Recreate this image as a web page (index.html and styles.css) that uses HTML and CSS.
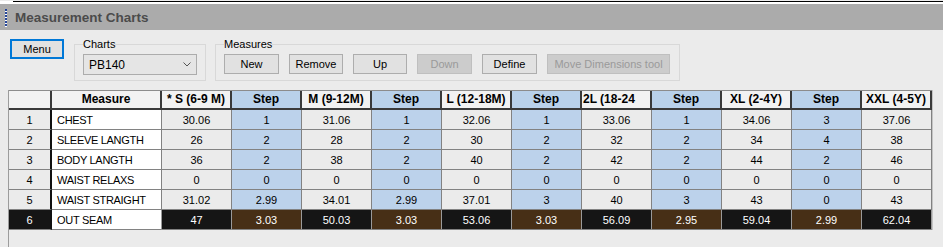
FILE: index.html
```html
<!DOCTYPE html>
<html lang="en">
<head>
    <meta charset="UTF-8">
    <title>Measurement Charts</title>
    <link rel="stylesheet" href="styles.css">
</head>
<body>
    <div class="topline"><div class="topline-bar"></div></div>
    <div class="titlebar">
        <span class="grip"></span>
        <span class="title">Measurement Charts</span>
    </div>

    <div class="toolbar">
        <button class="btn btn-menu">Menu</button>

        <fieldset class="group group-charts">
            <legend>Charts</legend>
            <div class="select">
                <span>PB140</span>
                <svg width="8" height="5" viewBox="0 0 8 5"><path d="M0.5 0.5 L4 4 L7.5 0.5" fill="none" stroke="#555" stroke-width="1"/></svg>
            </div>
        </fieldset>

        <fieldset class="group group-measures">
            <legend>Measures</legend>
            <button class="btn">New</button>
            <button class="btn btn-narrow">Remove</button>
            <button class="btn btn-narrow">Up</button>
            <button class="btn" disabled>Down</button>
            <button class="btn">Define</button>
            <button class="btn btn-wide" disabled>Move Dimensions tool</button>
        </fieldset>
    </div>

    <!-- measurement grid -->
    <div class="grid">
        <table>
            <thead>
                <tr>
                    <th class="num"></th>
                    <th class="name-col">Measure</th>
                    <th>* S (6-9 M)</th>
                    <th class="step">Step</th>
                    <th>M (9-12M)</th>
                    <th class="step">Step</th>
                    <th>L (12-18M)</th>
                    <th class="step">Step</th>
                    <th class="clip">2L (18-24</th>
                    <th class="step">Step</th>
                    <th>XL (2-4Y)</th>
                    <th class="step">Step</th>
                    <th>XXL (4-5Y)</th>
                </tr>
            </thead>
            <tbody>
                <tr>
                    <td class="num">1</td><td class="name">CHEST</td>
                    <td>30.06</td><td class="step">1</td><td>31.06</td><td class="step">1</td>
                    <td>32.06</td><td class="step">1</td><td>33.06</td><td class="step">1</td>
                    <td>34.06</td><td class="step">3</td><td>37.06</td>
                </tr>
                <tr>
                    <td class="num">2</td><td class="name">SLEEVE LANGTH</td>
                    <td>26</td><td class="step">2</td><td>28</td><td class="step">2</td>
                    <td>30</td><td class="step">2</td><td>32</td><td class="step">2</td>
                    <td>34</td><td class="step">4</td><td>38</td>
                </tr>
                <tr>
                    <td class="num">3</td><td class="name">BODY LANGTH</td>
                    <td>36</td><td class="step">2</td><td>38</td><td class="step">2</td>
                    <td>40</td><td class="step">2</td><td>42</td><td class="step">2</td>
                    <td>44</td><td class="step">2</td><td>46</td>
                </tr>
                <tr>
                    <td class="num">4</td><td class="name">WAIST RELAXS</td>
                    <td>0</td><td class="step">0</td><td>0</td><td class="step">0</td>
                    <td>0</td><td class="step">0</td><td>0</td><td class="step">0</td>
                    <td>0</td><td class="step">0</td><td>0</td>
                </tr>
                <tr>
                    <td class="num">5</td><td class="name">WAIST STRAIGHT</td>
                    <td>31.02</td><td class="step">2.99</td><td>34.01</td><td class="step">2.99</td>
                    <td>37.01</td><td class="step">3</td><td>40</td><td class="step">3</td>
                    <td>43</td><td class="step">0</td><td>43</td>
                </tr>
                <tr class="selected">
                    <td class="num">6</td><td class="name">OUT SEAM</td>
                    <td>47</td><td class="step">3.03</td><td>50.03</td><td class="step">3.03</td>
                    <td>53.06</td><td class="step">3.03</td><td>56.09</td><td class="step">2.95</td>
                    <td>59.04</td><td class="step">2.99</td><td>62.04</td>
                </tr>
            </tbody>
        </table>
    </div>
</body>
</html>
```

FILE: styles.css
```css
body {
    margin: 0;
    background-color: #ebebeb;
    font-family: "Liberation Sans", Arial, sans-serif;
    font-size: 11px;
    color: #000;
    overflow: hidden;
}

/* thin window edge on top */
.topline {
    height: 3px;
    background-color: #fff;
    padding-left: 13px;
}
.topline-bar {
    margin-top: 1px;
    height: 1px;
    background-color: #000;
}

.titlebar {
    height: 26px;
    background-color: #ababab;
    display: flex;
    align-items: center;
}
.grip {
    width: 2px;
    height: 18px;
    margin: 2px 8px 0 5px;
    background: repeating-linear-gradient(to bottom, #27479a 0 2px, #fff 2px 3px);
}
.title {
    font-size: 13.5px;
    font-weight: bold;
    color: #4b4b4b;
}

.toolbar {
    display: flex;
    align-items: flex-start;
    padding: 7px 0 0 10px;
}

.btn {
    height: 20px;
    width: 55px;
    padding: 0;
    background-color: #e1e1e1;
    border: 1px solid #adadad;
    font-family: "Liberation Sans", Arial, sans-serif;
    font-size: 11px;
    color: #000;
}
.btn:disabled {
    background-color: #cccccc;
    border-color: #bfbfbf;
    color: #9a9a9a;
}
.btn-menu {
    margin-top: 2px;
    width: 54px;
    border: 2px solid #0078d7;
}
.btn-narrow {
    width: 54px;
}
.btn-wide {
    width: 123px;
}

.group {
    margin: 0 0 0 10px;
    padding: 3px 8px 5px 8px;
    border: 1px solid #d8d8d8;
    display: flex;
    gap: 10px;
}
.group legend {
    padding: 0;
    line-height: 14px;
    font-size: 11px;
}
.group-measures {
    margin-left: 9px;
    padding-right: 9px;
    padding-bottom: 6px;
}

.select {
    width: 114px;
    height: 21px;
    box-sizing: border-box;
    background-color: #e5e5e5;
    border: 1px solid #acacac;
    display: flex;
    align-items: center;
    justify-content: space-between;
    padding: 0 5px 0 5px;
    font-size: 12px;
}

/* grid */
.grid {
    margin: 9px 0 0 8px;
    border-left: 1px solid #9c9c9c;
    height: 160px;
}
table {
    table-layout: fixed;
    width: 923px;
    border-collapse: separate;
    border-spacing: 0;
    border-top: 1px solid #8c8c8c;
    box-shadow: 1px 0 0 #c4c4c4;
}
th, td {
    box-sizing: border-box;
    width: 70px;
    padding: 0;
    text-align: center;
    white-space: nowrap;
    overflow: hidden;
}
th {
    height: 19px;
    line-height: 17px;
    font-size: 12px;
    font-weight: bold;
    background-color: #f2f2f2;
    border-right: 2px solid #3a3a3a;
    border-bottom: 2px solid #3a3a3a;
}
th.num {
    width: 43px;
}
th.name-col {
    width: 110px;
}
th.step {
    background-color: #b9d1ea;
}
th.clip {
    text-align: left;
    padding-left: 1px;
}
td {
    height: 20px;
    line-height: 17px;
    padding-top: 2px;
    background-color: #ebebeb;
    border-right: 1px solid #828282;
    border-bottom: 1px solid #828282;
}
td.num {
    border-right: 2px solid #111;
}
td.name {
    text-align: left;
    padding-left: 5px;
    background-color: #fff;
    letter-spacing: -0.3px;
}
td.step {
    background-color: #bcd2eb;
}

/* selected row */
tr.selected td {
    background-color: #151515;
    color: #fff;
    border-right-color: #9a9a9a;
}
tr.selected td.name {
    background-color: #fff;
    color: #000;
}
tr.selected td.num {
    border-right-color: #111;
}
tr.selected td.step {
    background-color: #472f16;
}
```
